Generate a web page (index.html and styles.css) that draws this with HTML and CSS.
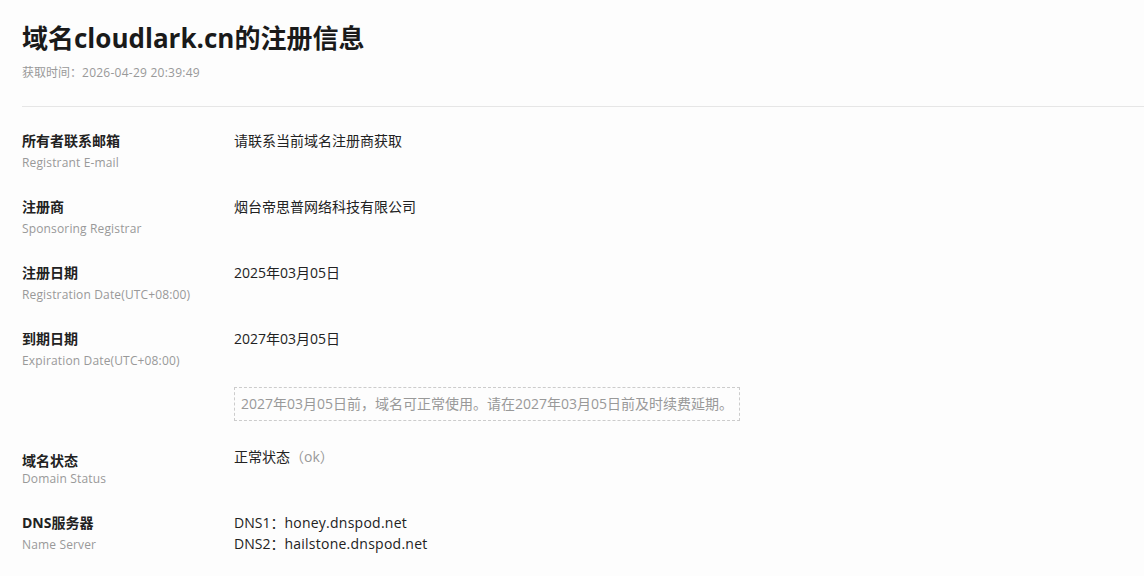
FILE: index.html
```html
<!DOCTYPE html>
<html>
<head>
    <meta charset="utf-8">
    <title>域名cloudlark.cn的注册信息</title>
    <link rel="stylesheet" href="styles.css">
</head>
<body>
    <div class="page">
        <div class="header">
            <h1 class="title">域名cloudlark.cn的注册信息</h1>
            <p class="fetch-time">获取时间：<span class="latin">2026-04-29 20:39:49</span></p>
        </div>
        <div class="info-list">
            <div class="info-row">
                <div class="info-label">
                    <div class="label-cn">所有者联系邮箱</div>
                    <div class="label-en">Registrant E-mail</div>
                </div>
                <div class="info-value">请联系当前域名注册商获取</div>
            </div>
            <div class="info-row">
                <div class="info-label">
                    <div class="label-cn">注册商</div>
                    <div class="label-en">Sponsoring Registrar</div>
                </div>
                <div class="info-value">烟台帝思普网络科技有限公司</div>
            </div>
            <div class="info-row">
                <div class="info-label">
                    <div class="label-cn">注册日期</div>
                    <div class="label-en">Registration Date(UTC+08:00)</div>
                </div>
                <div class="info-value">2025年03月05日</div>
            </div>
            <div class="info-row">
                <div class="info-label">
                    <div class="label-cn">到期日期</div>
                    <div class="label-en">Expiration Date(UTC+08:00)</div>
                </div>
                <div class="info-value">
                    <div>2027年03月05日</div>
                    <div class="notice">2027年03月05日前，域名可正常使用。请在2027年03月05日前及时续费延期。</div>
                </div>
            </div>
            <div class="info-row">
                <div class="info-label status-label">
                    <div class="label-cn">域名状态</div>
                    <div class="label-en">Domain Status</div>
                </div>
                <div class="info-value">正常状态<span class="muted">（ok）</span></div>
            </div>
            <div class="info-row">
                <div class="info-label">
                    <div class="label-cn">DNS服务器</div>
                    <div class="label-en">Name Server</div>
                </div>
                <div class="info-value">
                    <div>DNS1：<span class="latin">honey.dnspod.net</span></div>
                    <div>DNS2：<span class="latin">hailstone.dnspod.net</span></div>
                </div>
            </div>
        </div>
    </div>
</body>
</html>
```
FILE: styles.css
```css
body {
    margin: 0;
    padding: 0;
    background-color: #fdfdfd;
    color: #222;
    font-family: "Open Sans", "Noto Sans CJK SC", sans-serif;
    font-size: 14px;
}
.page {
    padding: 20px 0 0 22px;
}
.header {
    border-bottom: 1px solid #e6e6e6;
    padding-bottom: 24px;
}
.title {
    margin: 0;
    font-size: 26px;
    line-height: 36px;
    font-weight: bold;
    color: #1a1a1a;
}
.fetch-time {
    margin: 8px 0 0;
    font-size: 12px;
    line-height: 18px;
    color: #999;
}
.latin {
    letter-spacing: 0.25px;
}
.info-list {
    display: flex;
    flex-direction: column;
    gap: 25px;
    padding-top: 23px;
}
.info-row {
    display: flex;
}
.info-label {
    width: 212px;
    flex-shrink: 0;
}
.label-cn {
    font-weight: bold;
    line-height: 21px;
}
.label-en {
    font-size: 12px;
    line-height: 20px;
    padding-top: 2px;
    margin-bottom: -2px;
    color: #999;
    letter-spacing: 0.15px;
}
.status-label {
    padding-top: 6px;
}
.status-label .label-cn {
    line-height: 17px;
}
.status-label .label-en {
    padding-top: 0;
    margin-bottom: -2px;
}
.info-value {
    line-height: 21px;
}
.notice {
    display: inline-block;
    margin-top: 38px;
    padding: 5px 6px;
    border: 1px dashed #ccc;
    color: #999;
    line-height: 22px;
}
.muted {
    color: #999;
}
```
